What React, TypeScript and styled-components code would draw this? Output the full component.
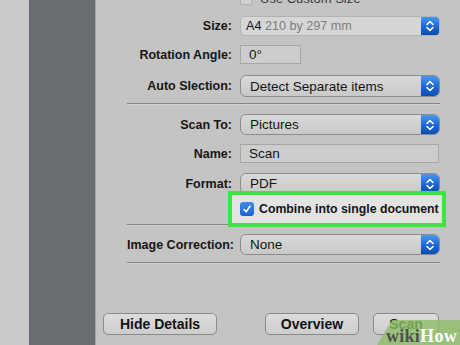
import React from 'react';
import styled, {createGlobalStyle} from 'styled-components';

const GlobalStyle = createGlobalStyle`
  html, body {
    margin: 0;
    padding: 0;
    background: #c4c4c4;
  }
  #root {
    width: 460px;
    height: 345px;
    overflow: hidden;
    position: relative;
  }
`;

const Chevrons = () => (
  <svg width="10" height="14" viewBox="0 0 10 14">
    <path
      d="M2 5.5 L5 2.5 L8 5.5 M2 8.5 L5 11.5 L8 8.5"
      fill="none"
      stroke="#fff"
      strokeWidth="1.6"
      strokeLinecap="round"
      strokeLinejoin="round"
    />
  </svg>
);

const Check = () => (
  <svg width="10" height="10" viewBox="0 0 10 10">
    <path
      d="M2 5.5 L4.2 7.8 L8 2.2"
      fill="none"
      stroke="#fff"
      strokeWidth="1.6"
      strokeLinecap="round"
      strokeLinejoin="round"
    />
  </svg>
);

type SelectProps = {
  children: React.ReactNode;
  modern?: boolean;
};

const Select = ({children, modern}: SelectProps) => (
  <SelectBox $modern={modern}>
    <SelectValue $modern={modern}>{children}</SelectValue>
    <SelectArrow>
      <Chevrons />
    </SelectArrow>
  </SelectBox>
);

export default function App() {
  return (
    <>
      <GlobalStyle />
      <Screen>
        <LeftStrip />
        <Sidebar />
        <Panel>
          <Form>
            <Row $h={14} $mt={-9}>
              <span />
              <CustomSize>
                <SmallBox />
                Use Custom Size
              </CustomSize>
            </Row>
            <Row $h={20} $mt={11}>
              <Label>Size:</Label>
              <Select modern>
                A4&nbsp;<Muted>210 by 297 mm</Muted>
              </Select>
            </Row>
            <Row $h={19} $mt={9}>
              <Label>Rotation Angle:</Label>
              <Input $w={61}>0°</Input>
            </Row>
            <Row $h={22} $mt={11}>
              <Label>Auto Slection:</Label>
              <Select>Detect Separate items</Select>
            </Row>
            <Separator $mt={6} />
            <Row $h={21} $mt={9}>
              <Label>Scan To:</Label>
              <Select>Pictures</Select>
            </Row>
            <Row $h={19} $mt={9}>
              <Label>Name:</Label>
              <Input>Scan</Input>
            </Row>
            <Row $h={21} $mt={10}>
              <Label>Format:</Label>
              <Select>PDF</Select>
            </Row>
            <Row $h={36} $mt={-3}>
              <span />
              <Highlight>
                <CheckBox>
                  <Check />
                </CheckBox>
                <CheckLabel>Combine into single document</CheckLabel>
              </Highlight>
            </Row>
            <Separator $mt={-3} />
            <Row $h={21} $mt={8}>
              <Label>Image Correction:</Label>
              <Select>None</Select>
            </Row>
            <Separator $mt={7} />
          </Form>
          <ButtonBar>
            <Button $w={114}>Hide Details</Button>
            <ButtonGroup>
              <Button $w={94}>Overview</Button>
              <Button $w={66}>Scan</Button>
            </ButtonGroup>
          </ButtonBar>
          <Watermark>
            <svg width="88" height="25" viewBox="0 0 88 25">
              <polygon points="20,0 88,0 88,25 5,25" fill="#8fbf68" opacity="0.8" />
            </svg>
            <WatermarkText>
              <WikiPart>wiki</WikiPart>How
            </WatermarkText>
          </Watermark>
        </Panel>
      </Screen>
    </>
  );
}

const Screen = styled.div`
  display: flex;
  width: 460px;
  height: 345px;
  font-family: 'Liberation Sans', Arial, Helvetica, sans-serif;
`;

const LeftStrip = styled.div`
  width: 29px;
  background: #cacaca;
`;

const Sidebar = styled.div`
  width: 66px;
  background: #696c70;
  border-right: 1px solid #a4a4a4;
`;

const Panel = styled.div`
  position: relative;
  flex: 1;
  display: flex;
  flex-direction: column;
  background: #c4c4c4;
  overflow: hidden;
`;

const Form = styled.div`
  display: flex;
  flex-direction: column;
  padding-left: 31px;
  width: 313px;
`;

const Row = styled.div<{$h: number; $mt: number}>`
  display: grid;
  grid-template-columns: 105px 200px;
  column-gap: 8px;
  align-items: center;
  height: ${p => p.$h}px;
  margin-top: ${p => p.$mt}px;
`;

const Label = styled.div`
  text-align: right;
  font-weight: bold;
  font-size: 12.5px;
  color: #161616;
  white-space: nowrap;
`;

const CustomSize = styled.div`
  display: flex;
  align-items: center;
  gap: 8px;
  font-size: 13px;
  color: #3a3a3a;
`;

const SmallBox = styled.span`
  width: 10px;
  height: 10px;
  border: 1px solid #b0b0b0;
  border-radius: 2px;
  background: #d2d2d2;
`;

const SelectBox = styled.div<{$modern?: boolean}>`
  display: flex;
  height: 100%;
  box-sizing: border-box;
  border: 1px solid ${p => (p.$modern ? '#b3b3b3' : '#8c8c8c')};
  border-radius: ${p => (p.$modern ? '4px' : '6px')};
  background: ${p =>
    p.$modern
      ? '#d6d6d6'
      : 'linear-gradient(#dadada, #cfcfcf 60%, #c9c9c9)'};
  overflow: hidden;
`;

const SelectValue = styled.div<{$modern?: boolean}>`
  flex: 1;
  display: flex;
  align-items: center;
  padding-left: ${p => (p.$modern ? '5px' : '9px')};
  font-size: ${p => (p.$modern ? '12.6px' : '13.5px')};
  color: #141414;
  white-space: nowrap;
`;

const Muted = styled.span`
  color: #7c7c7c;
`;

const SelectArrow = styled.div`
  width: 18px;
  display: flex;
  align-items: center;
  justify-content: center;
  background: linear-gradient(#4a97f2, #1c66d4 55%, #0b4bb0);
`;

const Input = styled.div<{$w?: number}>`
  display: flex;
  align-items: center;
  box-sizing: border-box;
  height: 100%;
  width: ${p => (p.$w ? `${p.$w}px` : '199px')};
  padding-left: 8px;
  border: 1px solid #a6a6a6;
  background: #cdcdcd;
  font-size: 13.5px;
  color: #141414;
`;

const Separator = styled.div<{$mt: number}>`
  width: 313px;
  height: 0;
  margin-top: ${p => p.$mt}px;
  border-top: 1px solid #858585;
  border-bottom: 1px solid #d2d2d2;
`;

const Highlight = styled.div`
  position: relative;
  z-index: 1;
  display: flex;
  align-items: center;
  box-sizing: border-box;
  height: 36px;
  width: 218px;
  margin-left: -12px;
  padding-left: 8px;
  border: 4px solid #3ce63c;
  background: #e3e3e3;
`;

const CheckBox = styled.span`
  display: flex;
  align-items: center;
  justify-content: center;
  width: 14px;
  height: 14px;
  border-radius: 3px;
  background: linear-gradient(#3f8df0, #1b63d0);
`;

const CheckLabel = styled.span`
  margin-left: 5px;
  font-weight: bold;
  font-size: 12.3px;
  color: #141414;
  white-space: nowrap;
`;

const ButtonBar = styled.div`
  display: flex;
  margin-top: 49px;
  padding: 0 21px 0 7px;
`;

const ButtonGroup = styled.div`
  display: flex;
  gap: 14px;
  margin-left: auto;
`;

const Button = styled.div<{$w: number}>`
  display: flex;
  align-items: center;
  justify-content: center;
  box-sizing: border-box;
  width: ${p => p.$w}px;
  height: 22px;
  border: 1px solid #8a8a8a;
  border-radius: 5px;
  background: linear-gradient(#dcdcdc, #cdcdcd);
  font-weight: bold;
  font-size: 14px;
  color: #121212;
`;

const Watermark = styled.div`
  position: absolute;
  right: 0;
  bottom: 0;
  width: 88px;
  height: 25px;
`;

const WatermarkText = styled.div`
  position: absolute;
  right: 3px;
  bottom: -2px;
  font-family: 'Liberation Serif', 'Times New Roman', serif;
  font-weight: bold;
  font-size: 18px;
  color: #fff;
  letter-spacing: 0.3px;
`;

const WikiPart = styled.span`
  color: #4f4f4f;
`;
